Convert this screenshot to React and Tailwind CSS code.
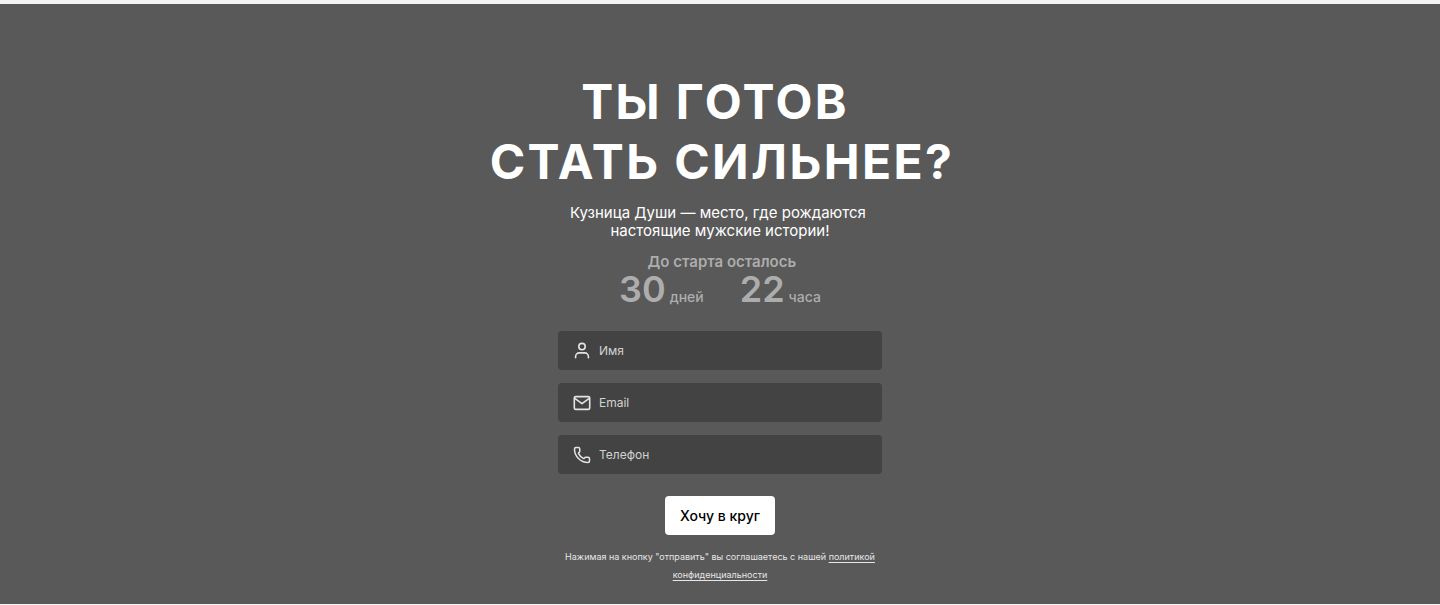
import React, { useState } from "react";
import { Phone } from "lucide-react";

const UserIcon = ({ className }) => (
  <svg
    viewBox="0 0 18 18"
    fill="none"
    stroke="currentColor"
    strokeWidth="1.6"
    strokeLinecap="round"
    strokeLinejoin="round"
    className={className}
  >
    <circle cx="9" cy="4.6" r="3.2" />
    <path d="M2.6 15.8v-1.3a3.6 3.6 0 0 1 3.6-3.6h5.6a3.6 3.6 0 0 1 3.6 3.6v1.3" />
  </svg>
);

const MailIcon = ({ className }) => (
  <svg
    viewBox="0 0 18 18"
    fill="none"
    stroke="currentColor"
    strokeWidth="1.6"
    strokeLinecap="round"
    strokeLinejoin="round"
    className={className}
  >
    <rect x="1.3" y="2.6" width="15.4" height="12.8" rx="1.4" />
    <path d="M1.8 4.4 9 9.6l7.2-5.2" />
  </svg>
);

const fields = [
  { name: "name", type: "text", placeholder: "Имя", Icon: UserIcon },
  { name: "email", type: "email", placeholder: "Email", Icon: MailIcon },
  { name: "phone", type: "tel", placeholder: "Телефон", Icon: Phone },
];

const countdown = [
  { value: 30, unit: "дней" },
  { value: 22, unit: "часа" },
];

const Field = ({ name, type, placeholder, Icon, value, onChange }) => (
  <label className="flex items-center gap-2 h-[39px] px-[15px] rounded bg-[#434343]">
    <Icon className="size-[18px] shrink-0 text-[#e4e4e4]" />
    <input
      type={type}
      name={name}
      aria-label={placeholder}
      placeholder={placeholder}
      value={value}
      onChange={onChange}
      className="min-w-0 flex-1 bg-transparent text-xs text-white placeholder:text-[#d2d2d2] outline-none"
    />
  </label>
);

const App = () => {
  const [form, setForm] = useState({ name: "", email: "", phone: "" });

  const handleChange = (e) => {
    setForm({ ...form, [e.target.name]: e.target.value });
  };

  return (
    <div className="min-h-screen border-y border-t-4 border-[#f4f4f4] bg-[#595959] font-['Inter',sans-serif] text-white">
      <section className="flex flex-col items-center px-4 pt-17 pb-5 text-center">
        <h1 className="pl-1 text-5xl leading-[60px] font-bold tracking-wider">
          ТЫ ГОТОВ&nbsp;
          <br />
          СТАТЬ СИЛЬНЕЕ?
        </h1>

        <p className="mt-3 text-[15px] leading-[18px]">
          Кузница Души — место, где рождаются&nbsp;
          <br />
          настоящие мужские истории!
        </p>

        <div className="mt-[13px] font-semibold text-[#adadad]">
          <h2 className="text-[15px] leading-[18px]">
            &nbsp;До старта осталось
          </h2>
          <div className="flex justify-center gap-9">
            {countdown.map(({ value, unit }) => (
              <p key={unit} className="flex items-baseline gap-1">
                <span className="text-4xl leading-9">{value}</span>
                <span className="text-sm font-medium">{unit}</span>
              </p>
            ))}
          </div>
        </div>

        <form
          onSubmit={(e) => e.preventDefault()}
          className="mt-6 flex w-full max-w-[324px] flex-col items-center"
        >
          <div className="flex w-full flex-col gap-[13px]">
            {fields.map((field) => (
              <Field
                key={field.name}
                {...field}
                value={form[field.name]}
                onChange={handleChange}
              />
            ))}
          </div>

          <button
            type="submit"
            className="mt-[22px] h-[39px] rounded bg-white px-[15px] text-sm font-medium text-black"
          >
            Хочу в круг
          </button>

          <p className="mt-[13px] text-[9px] leading-[18px] text-[#e6e6e6]">
            Нажимая на кнопку "отправить" вы соглашаетесь с нашей{" "}
            <a href="#privacy" className="underline underline-offset-2">
              политикой конфиденциальности
            </a>
          </p>
        </form>
      </section>
    </div>
  );
};

export default App;
